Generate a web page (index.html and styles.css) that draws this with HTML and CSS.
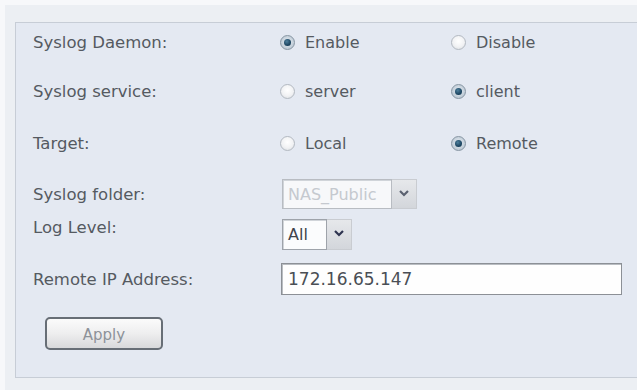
FILE: index.html
```html
<!DOCTYPE html>
<html>
<head>
<meta charset="utf-8">
<link rel="stylesheet" href="styles.css">
</head>
<body>
<div class="frame">
  <div class="outer">
    <div class="panel">
      <div class="row">
        <div class="label">Syslog Daemon:</div>
        <label class="opt"><span class="radio checked"></span>Enable</label>
        <label class="opt"><span class="radio"></span>Disable</label>
      </div>
      <div class="row gap-17">
        <div class="label">Syslog service:</div>
        <label class="opt"><span class="radio"></span>server</label>
        <label class="opt"><span class="radio checked"></span>client</label>
      </div>
      <div class="row gap-20">
        <div class="label">Target:</div>
        <label class="opt"><span class="radio"></span>Local</label>
        <label class="opt"><span class="radio checked"></span>Remote</label>
      </div>
      <div class="row gap-19">
        <div class="label">Syslog folder:</div>
        <div class="select disabled">
          <div class="sel-field wide">NAS_Public</div>
          <div class="sel-btn">
            <svg width="12" height="8" viewBox="0 0 12 8"><polyline points="2,2 6,6 10,2" fill="none" stroke="#5a6170" stroke-width="2.2"/></svg>
          </div>
        </div>
      </div>
      <div class="row gap-8 top">
        <div class="label">Log Level:</div>
        <div class="select tall">
          <div class="sel-field narrow">All</div>
          <div class="sel-btn">
            <svg width="12" height="8" viewBox="0 0 12 8"><polyline points="2,2 6,6 10,2" fill="none" stroke="#2e3450" stroke-width="2.2"/></svg>
          </div>
        </div>
      </div>
      <div class="row gap-13">
        <div class="label">Remote IP Address:</div>
        <div class="ip">172.16.65.147</div>
      </div>
      <div class="actions">
        <button class="btn">Apply</button>
      </div>
    </div>
  </div>
</div>
</body>
</html>
```

FILE: styles.css
```css
html, body {
  margin: 0;
  padding: 0;
  overflow: hidden;
  background: #f7f8fa;
}
body {
  width: 637px;
  height: 390px;
  font-family: "DejaVu Sans", Verdana, sans-serif;
  font-size: 16px;
  color: #555a61;
}
.frame {
  padding: 5px 0 0 5px;
}
.outer {
  background: #eceff3;
  padding: 17px 0 12px 10px;
}
.panel {
  background: #e4e9f2;
  border-top: 1px solid #c7cdd6;
  border-left: 1px solid #c7cdd6;
  border-bottom: 1px solid #c7cdd6;
  padding: 3px 0 27px 17px;
  display: flex;
  flex-direction: column;
}
.row {
  height: 32px;
  display: flex;
  align-items: center;
}
.row.top {
  align-items: flex-start;
}
.gap-17 { margin-top: 17px; }
.gap-20 { margin-top: 20px; }
.gap-19 { margin-top: 19px; }
.gap-8 { margin-top: 8px; }
.gap-13 { margin-top: 13px; }
.label {
  width: 248px;
  flex: none;
  white-space: nowrap;
  font-size: 16.5px;
}
.opt {
  width: 172px;
  flex: none;
  display: flex;
  align-items: center;
  margin-left: -1px;
}
.radio {
  width: 13px;
  height: 13px;
  border-radius: 50%;
  border: 1px solid #b3b9c1;
  background: radial-gradient(circle at 50% 40%, #ffffff 0%, #f1f2f4 55%, #d6dadf 100%);
  margin-right: 10px;
  display: flex;
  align-items: center;
  justify-content: center;
  flex: none;
}
.radio.checked {
  border-color: #8796a3;
  background: radial-gradient(circle at 50% 45%, #e6edf3 0%, #bfcbd6 70%, #9dadbb 100%);
}
.radio.checked::after {
  content: "";
  width: 7px;
  height: 7px;
  border-radius: 50%;
  background: radial-gradient(circle at 40% 35%, #4d7f9c 0%, #1d4662 60%, #10324a 100%);
}
.select {
  display: flex;
  height: 30px;
  margin-left: 1px;
}
.select.tall {
  height: 31px;
  margin-top: 1px;
}
.sel-field {
  background: #fbfcfd;
  border: 1px solid #9ea3aa;
  box-shadow: inset 1px 1px 0 #d0d4d9;
  display: flex;
  align-items: center;
  padding-left: 5px;
  box-sizing: border-box;
  height: 100%;
}
.sel-field.wide {
  width: 110px;
}
.sel-field.narrow {
  width: 45px;
  color: #40444b;
}
.disabled .sel-field {
  color: #c5c9cf;
  background: #f7f8fa;
  border-color: #b8bcc2;
}
.sel-btn {
  width: 25px;
  height: 100%;
  background: linear-gradient(#e6e8eb, #d3d6db);
  border: 1px solid #c9ccd1;
  border-left: none;
  box-sizing: border-box;
  display: flex;
  align-items: flex-start;
  justify-content: center;
  padding-top: 9px;
}
.ip {
  width: 341px;
  height: 32px;
  box-sizing: border-box;
  background: #fefefe;
  border: 1px solid #8c9096;
  box-shadow: inset 1px 1px 0 #b9bdc2;
  padding-left: 6px;
  display: flex;
  align-items: center;
  font-size: 17px;
  color: #4a4e55;
}
.actions {
  margin-top: 22px;
  padding-left: 12px;
}
.btn {
  width: 118px;
  height: 33px;
  border: 2px solid #676e76;
  border-radius: 5px;
  background: linear-gradient(#fbfbfb 0%, #eeeeef 50%, #d8d9db 100%);
  font-family: "DejaVu Sans", Verdana, sans-serif;
  font-size: 15px;
  color: #8d9299;
  padding: 2px 0 0 0;
}
```
